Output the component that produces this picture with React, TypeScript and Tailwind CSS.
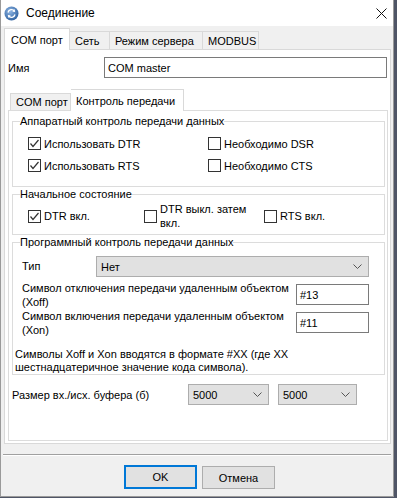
import React from 'react';

const Check: React.FC<{ on?: boolean }> = ({ on }) => (
  <span className="w-[13px] h-[13px] border border-[#333333] bg-white flex items-center justify-center shrink-0">
    {on && (
      <svg width="11" height="11" viewBox="0 0 11 11">
        <path d="M1.5 5.5 L4 8.5 L9.5 2" fill="none" stroke="#333" strokeWidth="1.2" />
      </svg>
    )}
  </span>
);

const Chevron = () => (
  <svg width="9" height="5" viewBox="0 0 9 5" className="shrink-0">
    <path d="M0.5 0.5 L4.5 4.5 L8.5 0.5" fill="none" stroke="#555" strokeWidth="1" />
  </svg>
);

const Select: React.FC<{ value: string; w: string }> = ({ value, w }) => (
  <div className={`${w} h-[21px] bg-[#e1e1e1] border border-[#adadad] flex items-center justify-between pl-[4px] pr-[6px]`}>
    <span>{value}</span>
    <Chevron />
  </div>
);

const Field: React.FC<{ value: string; w: string }> = ({ value, w }) => (
  <div className={`${w} h-[21px] bg-white border border-[#7a7a7a] flex items-center pl-[3px] shrink-0`}>{value}</div>
);

export default function App() {
  return (
    <div className="w-[397px] h-[498px] bg-[#4f5566] font-['Liberation_Sans',Arial,sans-serif] text-[11px] leading-[14px] text-black">
      <div className="w-[394px] h-[497px] border-x border-b border-[#9a9a9a] bg-[#f0f0f0] flex flex-col">
        {/* title bar */}
        <div className="h-[26px] bg-white flex items-center shrink-0">
          <svg width="15" height="15" viewBox="0 0 15 15" className="ml-[3px] mt-[1px]">
            <defs>
              <radialGradient id="g" cx="40%" cy="35%" r="70%">
                <stop offset="0" stopColor="#8fb6e4" />
                <stop offset="1" stopColor="#2c5f9e" />
              </radialGradient>
            </defs>
            <circle cx="7.5" cy="7.5" r="7" fill="url(#g)" />
            <path d="M4 6.5 A3.5 3.5 0 0 1 10.5 5.5 M11 8.5 A3.5 3.5 0 0 1 4.5 9.5" fill="none" stroke="#fff" strokeWidth="1.3" />
            <path d="M10.5 3 L11.2 6 L8.3 5.6 Z M4.5 12 L3.8 9 L6.7 9.4 Z" fill="#fff" />
          </svg>
          <span className="ml-[7px] text-[12px]">Соединение</span>
          <svg width="11" height="11" viewBox="0 0 11 11" className="ml-auto mr-[6px]">
            <path d="M0.5 0.5 L10.5 10.5 M10.5 0.5 L0.5 10.5" stroke="#111" strokeWidth="1" />
          </svg>
        </div>

        {/* outer tabs */}
        <div className="pl-[3px] mt-[2px] flex items-end h-[21px] relative z-10 whitespace-nowrap">
          <div className="h-[22px] -mb-px bg-white border border-b-0 border-[#d9d9d9] px-[6px] flex items-center w-[66px]">COM порт</div>
          <div className="h-[18px] border border-l-0 border-b-0 border-[#d9d9d9] flex items-center px-[5px] w-[40px]">Сеть</div>
          <div className="h-[18px] border border-l-0 border-b-0 border-[#d9d9d9] flex items-center px-[5px] w-[93px]">Режим сервера</div>
          <div className="h-[18px] border border-l-0 border-b-0 border-[#d9d9d9] flex items-center px-[5px] w-[56px]">MODBUS</div>
        </div>

        {/* outer panel */}
        <div className="ml-[3px] w-[387px] h-[395px] border border-[#d9d9d9] bg-white">
          <div className="mt-[7px] flex items-center h-[21px]">
            <span className="pl-[3px] w-[99px]">Имя</span>
            <Field value="COM master" w="w-[283px]" />
          </div>

          {/* inner tabs */}
          <div className="mt-[11px] ml-[5px] flex items-end h-[21px] relative z-10 whitespace-nowrap">
            <div className="h-[17px] border border-b-0 border-[#d9d9d9] bg-[#f0f0f0] px-[5px] flex items-center w-[61px]">COM порт</div>
            <div className="h-[22px] -mb-px bg-white border border-l-0 border-b-0 border-[#d9d9d9] px-[5px] flex items-center w-[113px]">Контроль передачи</div>
          </div>

          <div className="ml-[3px] w-[380px] h-[331px] border border-[#dcdcdc] bg-white">
            {/* hardware */}
            <fieldset className="ml-[3px] mt-[3px] w-[373px] border border-[#dcdcdc]">
              <legend className="ml-[7px] leading-[14px]">Аппаратный контроль передачи данных</legend>
              <div className="grid grid-cols-[180px_auto] gap-y-[9px] pl-[15px] pt-[9px] pb-[14px]">
                <div className="flex items-center h-[13px] gap-[3px]"><Check on />Использовать DTR</div>
                <div className="flex items-center h-[13px] gap-[3px]"><Check />Необходимо DSR</div>
                <div className="flex items-center h-[13px] gap-[3px]"><Check on />Использовать RTS</div>
                <div className="flex items-center h-[13px] gap-[3px]"><Check />Необходимо CTS</div>
              </div>
            </fieldset>

            {/* initial state */}
            <fieldset className="ml-[3px] w-[373px] border border-[#dcdcdc]">
              <legend className="ml-[7px] leading-[14px]">Начальное состояние</legend>
              <div className="grid grid-cols-[116px_120px_auto] h-[28px] items-center pl-[15px] mt-[1px] mb-[4px]">
                <div className="flex items-center gap-[3px]"><Check on />DTR вкл.</div>
                <div className="flex items-center gap-[3px]"><Check /><span>DTR выкл. затем<br />вкл.</span></div>
                <div className="flex items-center gap-[3px]"><Check />RTS вкл.</div>
              </div>
            </fieldset>

            {/* software */}
            <fieldset className="ml-[3px] w-[373px] border border-[#dcdcdc]">
              <legend className="ml-[7px] leading-[14px]">Программный контроль передачи данных</legend>
              <div className="pl-[9px] pt-[7px]">
                <div className="flex items-start">
                  <span className="w-[74px] mt-[3px]">Тип</span>
                  <Select value="Нет" w="w-[273px]" />
                </div>
                <div className="mt-[4px] flex items-start">
                  <span className="w-[274px]">Символ отключения передачи удаленным объектом<br />(Xoff)</span>
                  <div className="mt-[3px]"><Field value="#13" w="w-[73px]" /></div>
                </div>
                <div className="flex items-start">
                  <span className="w-[274px]">Символ включения передачи удаленным объектом<br />(Xon)</span>
                  <div className="mt-[3px]"><Field value="#11" w="w-[73px]" /></div>
                </div>
              </div>
              <p className="mt-[11px] pl-[2px] leading-[13px]">
                Символы Xoff и Xon вводятся в формате #XX (где XX<br />шестнадцатеричное значение кода символа).
              </p>
            </fieldset>

            <div className="mt-[9px] pl-[3px] flex items-center">
              <span className="w-[176px]">Размер вх./исх. буфера (б)</span>
              <Select value="5000" w="w-[81px]" />
              <div className="ml-[9px]"><Select value="5000" w="w-[79px]" /></div>
            </div>
          </div>
        </div>

        <div className="mt-[10px] mx-[2px] h-[2px] border-t border-[#a0a0a0] border-b border-b-white" />

        <div className="mt-[9px] pl-[123px] flex gap-[5px]">
          <button className="w-[73px] h-[24px] bg-[#e1e1e1] border-2 border-[#0078d7]">OK</button>
          <button className="w-[73px] h-[23px] mt-px bg-[#e1e1e1] border border-[#adadad]">Отмена</button>
        </div>
      </div>
    </div>
  );
}
